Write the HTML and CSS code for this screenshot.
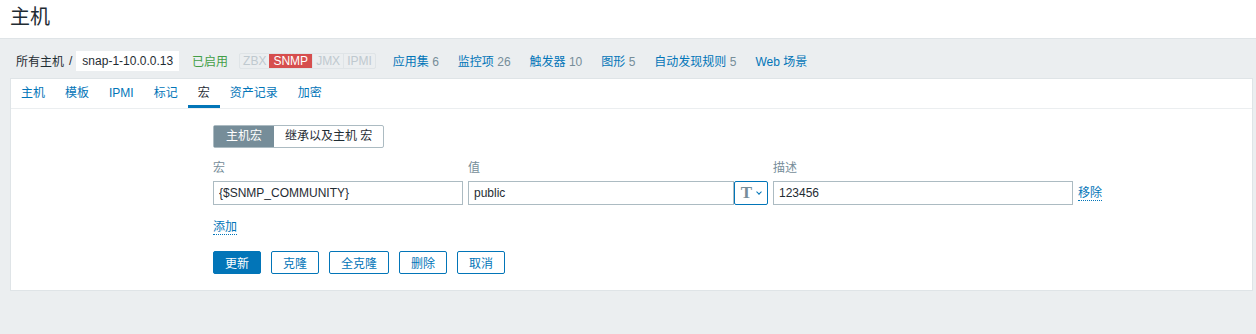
FILE: index.html
```html
<!DOCTYPE html>
<html>

<head>
	<meta charset="utf-8">
	<title>主机</title>
	<link rel="stylesheet" href="styles.css">
</head>

<body>
	<div class="header">
		<h1>主机</h1>
	</div>

	<div class="main">
		<ul class="crumbs">
			<li class="path"><a href="#">所有主机</a><span class="sep">/</span><span class="current">snap-1-10.0.0.13</span></li>
			<li class="status">已启用</li>
			<li class="avail">
				<span>ZBX</span><span class="on">SNMP</span><span>JMX</span><span>IPMI</span>
			</li>
			<li><a href="#">应用集</a> <sup>6</sup></li>
			<li><a href="#">监控项</a> <sup>26</sup></li>
			<li><a href="#">触发器</a> <sup>10</sup></li>
			<li><a href="#">图形</a> <sup>5</sup></li>
			<li><a href="#">自动发现规则</a> <sup>5</sup></li>
			<li><a href="#">Web 场景</a></li>
		</ul>

		<div class="panel">
			<ul class="tabs">
				<li><a href="#">主机</a></li>
				<li><a href="#">模板</a></li>
				<li><a href="#">IPMI</a></li>
				<li><a href="#">标记</a></li>
				<li class="active"><a href="#">宏</a></li>
				<li><a href="#">资产记录</a></li>
				<li><a href="#">加密</a></li>
			</ul>

			<div class="form">
				<div class="toggle">
					<span class="sel">主机宏</span><span>继承以及主机 宏</span>
				</div>

				<div class="macros">
					<div class="row labels">
						<span class="c-macro">宏</span>
						<span class="c-value">值</span>
						<span class="c-desc">描述</span>
					</div>
					<div class="row">
						<input class="c-macro" type="text" value="{$SNMP_COMMUNITY}">
						<div class="c-value value-box">
							<input type="text" value="public">
							<button class="type-btn">T<i></i></button>
						</div>
						<input class="c-desc" type="text" value="123456">
						<a href="#" class="dotted">移除</a>
					</div>
					<a href="#" class="dotted add">添加</a>
				</div>

				<div class="buttons">
					<button class="primary">更新</button>
					<button>克隆</button>
					<button>全克隆</button>
					<button>删除</button>
					<button>取消</button>
				</div>
			</div>
		</div>
	</div>
</body>

</html>
```

FILE: styles.css
```css
* {
	margin: 0;
	padding: 0;
	box-sizing: border-box;
}

ul {
	list-style: none;
}

body {
	background: #ebeef0;
	font-family: "Liberation Sans", Arial, "Noto Sans CJK SC", sans-serif;
	font-size: 12px;
	color: #1f2c33;
}

a {
	color: #0275b8;
	text-decoration: none;
}

.header {
	background: #fff;
	height: 39px;
	border-bottom: 1px solid #dfe4e7;
	padding: 4px 10px 0;
}

.header h1 {
	font-size: 20px;
	font-weight: normal;
	line-height: 26px;
}

.main {
	padding: 11px 3px 0 10px;
}

/* 面包屑和主机信息 */
.crumbs {
	display: flex;
	align-items: center;
	height: 21px;
	margin-bottom: 7px;
}

.crumbs li {
	margin-right: 19px;
	white-space: nowrap;
}

.crumbs .path {
	display: flex;
	align-items: center;
	padding-left: 6px;
	margin-right: 13px;
}

.crumbs .path a {
	color: #1f2c33;
}

.crumbs .sep {
	margin: 0 4px 0 5px;
}

.crumbs .current {
	background: #fff;
	height: 20px;
	line-height: 20px;
	padding: 0 6px;
	color: #1f2c33;
}

.crumbs .status {
	color: #429e47;
	margin-right: 11px;
}

.crumbs .avail {
	display: flex;
	border: 1px solid #dfe4e7;
	border-radius: 2px;
	height: 16px;
	margin-right: 17px;
}

.crumbs .avail span {
	color: #bfc9cf;
	padding: 0 3px;
	line-height: 14px;
	border-left: 1px solid #dfe4e7;
}

.crumbs .avail span:first-child {
	border-left: none;
}

.crumbs .avail .on {
	background: #d64e4e;
	color: #fff;
	border-left: none;
	padding: 0 4px;
}

.crumbs sup {
	vertical-align: baseline;
	color: #768d99;
	font-size: 12px;
}

/* 标签页面板 */
.panel {
	background: #fff;
	border: 1px solid #dfe4e7;
	height: 213px;
}

.tabs {
	display: flex;
	border-bottom: 1px solid #ebeef0;
	height: 30px;
}

.tabs li {
	padding: 0 10px;
	line-height: 29px;
	border-bottom: 3px solid transparent;
}

.tabs li.active {
	border-bottom-color: #0275b8;
}

.tabs li.active a {
	color: #1f2c33;
}

.form {
	padding: 16px 0 0 202px;
}

.toggle {
	display: inline-flex;
	border: 1px solid #acbbc2;
	border-radius: 2px;
	height: 23px;
}

.toggle span {
	line-height: 21px;
	padding: 0 11px;
	color: #1f2c33;
}

.toggle .sel {
	background: #768d99;
	color: #fff;
	padding: 0 12px;
}

.macros {
	margin-top: 10px;
}

.row {
	display: flex;
	align-items: center;
}

.row.labels {
	height: 17px;
	color: #768d99;
	margin-bottom: 6px;
}

.row .c-macro {
	width: 250px;
}

.row .c-value {
	width: 300px;
	margin-left: 5px;
}

.row .c-desc {
	width: 300px;
	margin-left: 5px;
}

input {
	height: 24px;
	border: 1px solid #acbbc2;
	padding: 0 5px;
	font-family: inherit;
	font-size: 12px;
	color: #1f2c33;
	background: #fff;
}

.value-box {
	display: flex;
}

.value-box input {
	width: 266px;
}

.type-btn {
	width: 34px;
	height: 24px;
	border: 1px solid #0275b8;
	border-radius: 2px;
	background: #fff;
	color: #768d99;
	font-family: "Liberation Serif", "Times New Roman", serif;
	font-size: 17px;
	font-weight: bold;
	display: flex;
	align-items: center;
	justify-content: center;
	gap: 5px;
}

.type-btn i {
	width: 4px;
	height: 4px;
	border-right: 1px solid #0275b8;
	border-bottom: 1px solid #0275b8;
	transform: rotate(45deg);
	margin-top: -2px;
}

.dotted {
	border-bottom: 1px dotted #0275b8;
	line-height: 14px;
}

.row .dotted {
	margin-left: 5px;
}

.add {
	display: inline-block;
	margin-top: 15px;
}

.buttons {
	display: flex;
	gap: 10px;
	margin-top: 16px;
}

button {
	font-family: inherit;
	font-size: 12px;
	cursor: pointer;
}

.buttons button {
	height: 23px;
	padding: 0 11px;
	border: 1px solid #0275b8;
	border-radius: 2px;
	background: #fff;
	color: #0275b8;
}

.buttons button.primary {
	background: #0275b8;
	color: #fff;
	padding: 0 11px;
}
```
